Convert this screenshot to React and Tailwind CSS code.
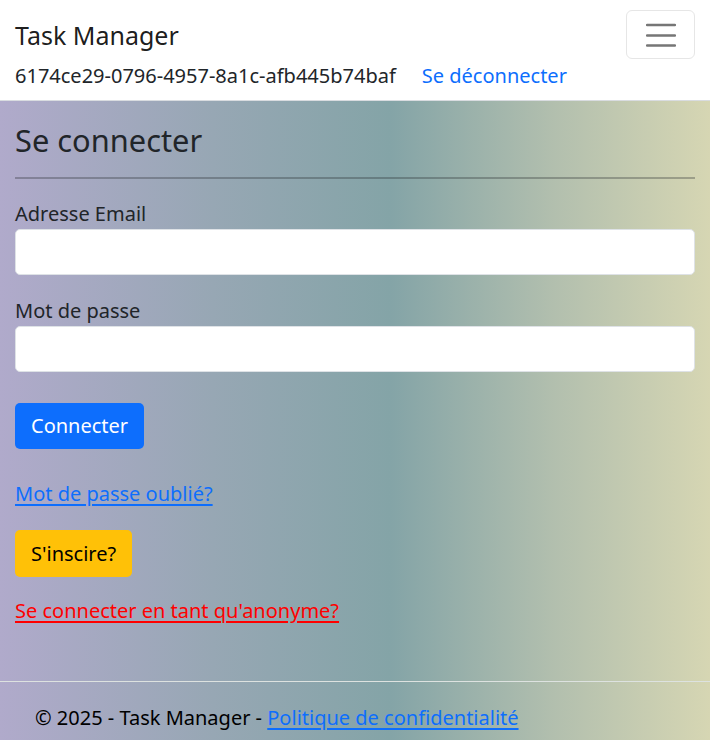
import React from "react";

const font = { fontFamily: '"Noto Sans", "Open Sans", sans-serif' };

function Toggler() {
  return (
    <button
      type="button"
      className="flex h-[49px] w-[69px] items-center justify-center rounded-[6px] border border-[#e6e6e6] bg-white"
      aria-label="Menu"
    >
      <svg width="30" height="30" viewBox="0 0 30 30" className="block">
        <path
          d="M1 5h28M1 15.5h28M1 25.5h28"
          stroke="#767676"
          strokeWidth="2.4"
          strokeLinecap="round"
        />
      </svg>
    </button>
  );
}

function Field({ label, type }) {
  return (
    <div className="mb-[21px]">
      <label className="block h-[30px] leading-[30px] text-[20px] text-[#212529]">
        {label}
      </label>
      <input
        type={type}
        className="block h-[46px] w-full rounded-[5px] border border-[#dee2e6] bg-white px-[15px] text-[20px] outline-none"
      />
    </div>
  );
}

export default function App() {
  return (
    <div
      style={font}
      className="flex min-h-screen flex-col overflow-hidden bg-[linear-gradient(to_right,#b0aacb_0%,#97a7b4_30%,#84a4a7_55%,#b2bfae_78%,#d6d6b3_100%)]"
    >
      <nav className="border-b border-[#d9dce0] bg-white px-[15px] pt-[10px] pb-[7px]">
        <div className="flex h-[49px] items-center justify-between">
          <span className="pt-[2px] text-[25px] leading-none text-[rgba(0,0,0,0.9)]">
            Task Manager
          </span>
          <Toggler />
        </div>
        <div className="flex h-[34px] items-center text-[20px] leading-[30px]">
          <span className="text-[#212529]">
            6174ce29-0796-4957-8a1c-afb445b74baf
          </span>
          <a href="#" className="ml-[26px] text-[#0d6efd]">
            Se déconnecter
          </a>
        </div>
      </nav>

      <main className="flex-1 px-[15px] pt-[20px]">
        <h2 className="h-[38px] text-[30.8px] leading-[38px] text-[#212529]">
          Se connecter
        </h2>
        <hr className="mt-[18px] mb-[20px] h-0 border-0 border-t-2 border-[rgba(33,37,41,0.3)]" />

        <Field label="Adresse Email" type="email" />
        <Field label="Mot de passe" type="password" />

        <button
          type="button"
          className="mt-[10px] h-[46px] rounded-[5px] bg-[#0d6efd] px-[16px] text-[20px] leading-[30px] text-white"
        >
          Connecter
        </button>

        <p className="mt-[30px] h-[30px] text-[20px] leading-[30px]">
          <a href="#" className="text-[#0d6efd] underline underline-offset-[3px]">
            Mot de passe oublié?
          </a>
        </p>

        <button
          type="button"
          className="mt-[21px] h-[47px] rounded-[5px] bg-[#ffc107] px-[16px] text-[20px] leading-[30px] text-black"
        >
          S'inscire?
        </button>

        <p className="mt-[19px] h-[30px] text-[20px] leading-[30px]">
          <a href="#" className="text-[#ff0000] underline underline-offset-[3px]">
            Se connecter en tant qu'anonyme?
          </a>
        </p>
      </main>

      <footer className="h-[59px] shrink-0 border-t border-[#dde2e0] pl-[35px] pt-[21px] text-[20px] leading-[29px] whitespace-nowrap text-black">
        © 2025 - Task Manager -{" "}
        <a href="#" className="text-[#0d6efd] underline underline-offset-[3px]">
          Politique de confidentialité
        </a>
      </footer>
    </div>
  );
}
